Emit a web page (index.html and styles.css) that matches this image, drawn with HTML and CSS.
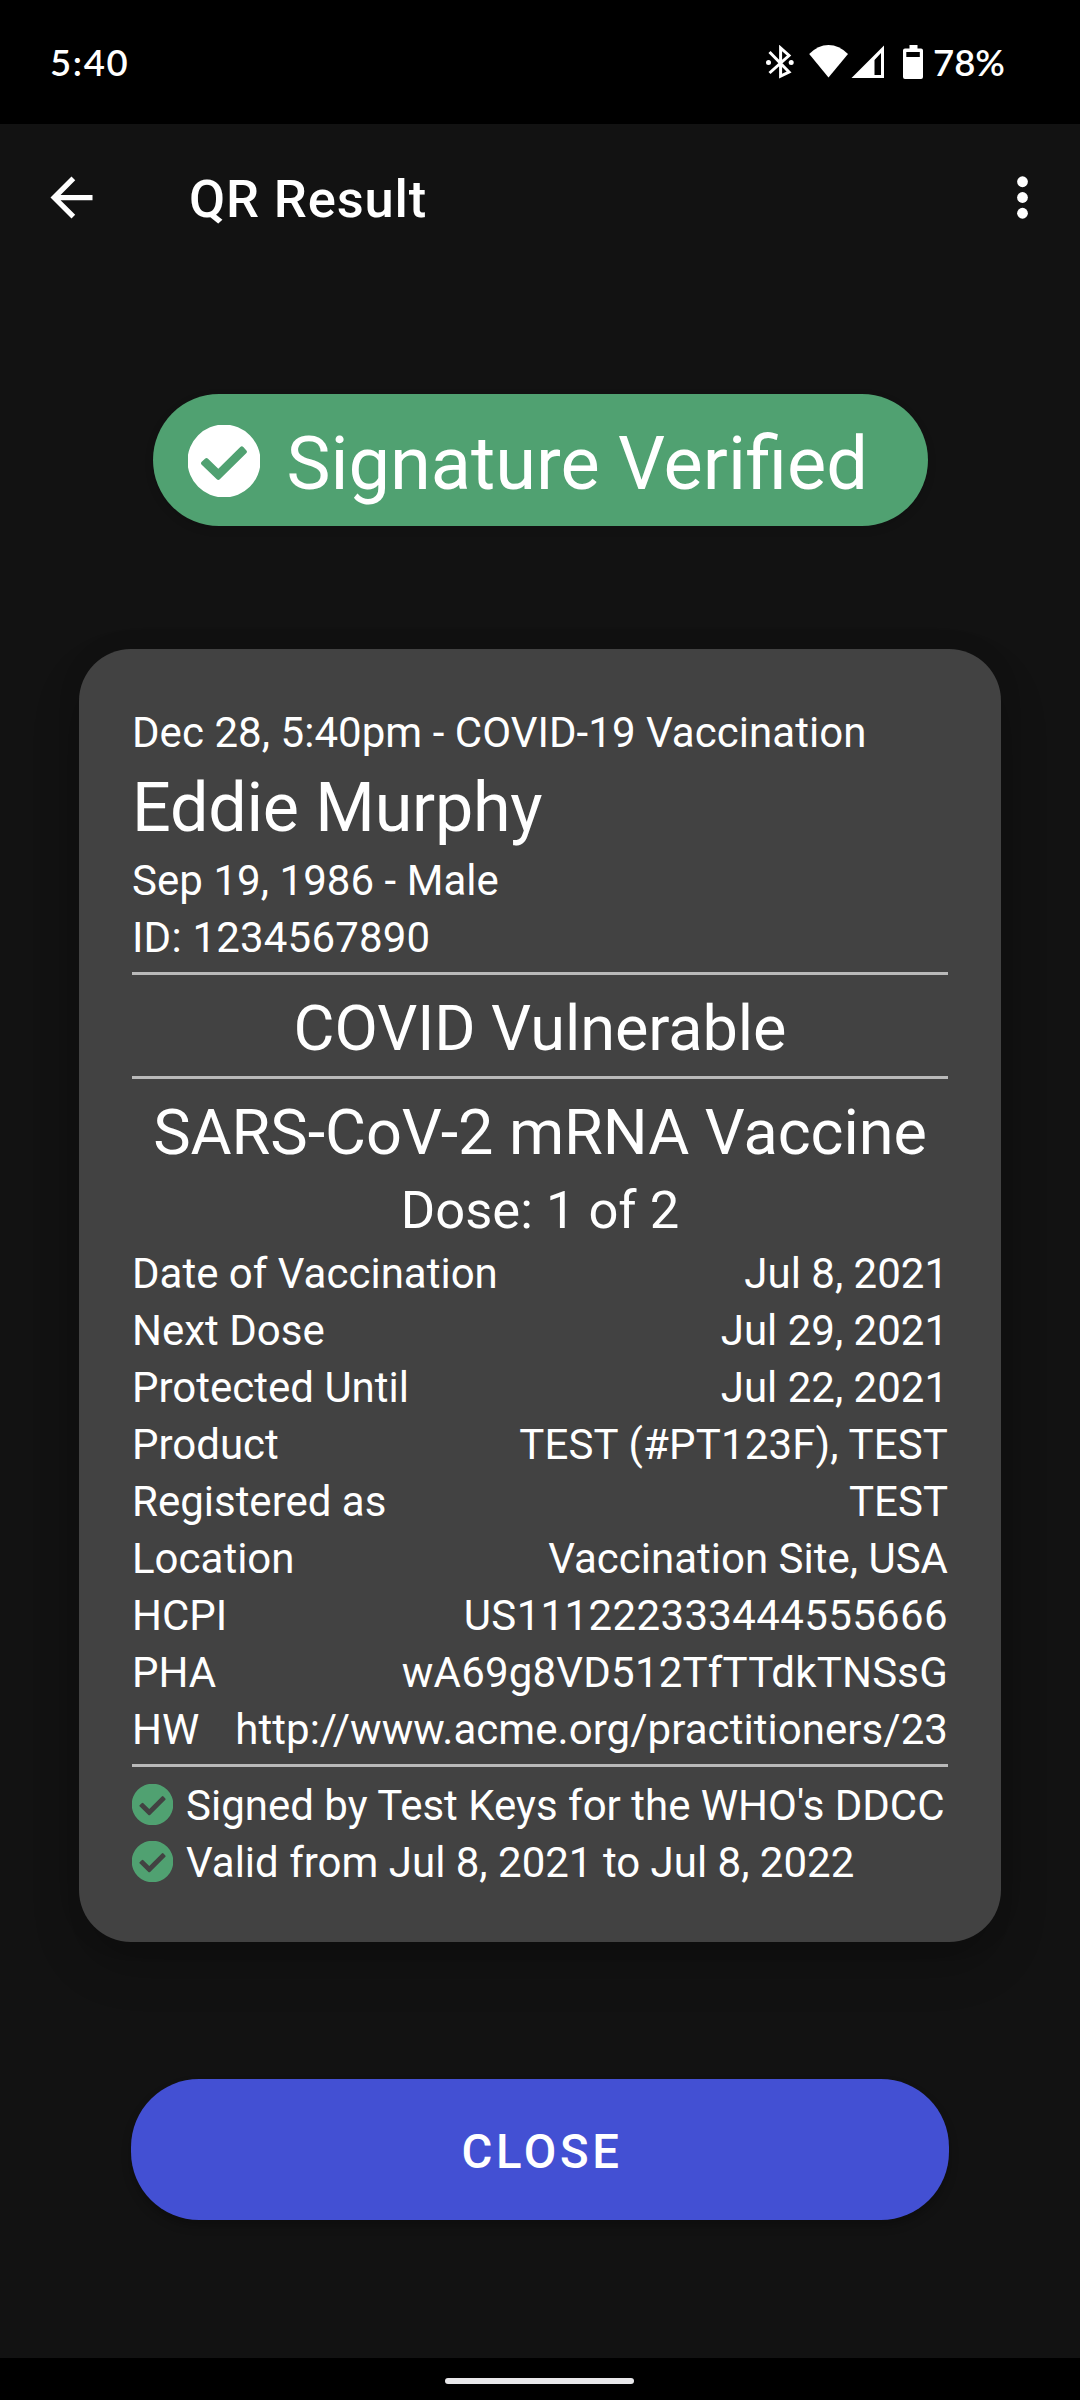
FILE: index.html
```html
<!DOCTYPE html>
<html lang="en">
<head>
<meta charset="utf-8">
<title>QR Result</title>
<link rel="stylesheet" href="styles.css">
</head>
<body>
<svg class="defs" aria-hidden="true">
  <symbol id="check" viewBox="0 0 72 72">
    <path fill="currentColor" fill-rule="evenodd" d="M36-.5a36.500 36.500 0 1 1 0 73a36.500 36.500 0 1 1 0-73zM13.700 36.700Q12.200 38.200 13.700 39.700L28.800 54.300Q30.300 55.800 31.800 54.300L58.200 28.200Q59.700 26.700 58.200 25.200L55.300 22Q53.800 20.500 52.300 22L30.300 43.700L20 33.800Q18.500 32.300 17 33.800z"/>
  </symbol>
</svg>
<div class="screen">
  <div class="status">
    <span class="clock">5:40</span>
    <svg class="indicators" viewBox="0 0 158 34" fill="#fff">
      <g fill="none" stroke="#fff" stroke-width="3">
        <path d="M3.500 7L23 27L14.600 31V3L23 10.500L3.500 28"/>
      </g>
      <circle cx="2.500" cy="17.500" r="2.500"/><circle cx="25.200" cy="17.500" r="2.500"/>
      <path d="M43.200 9Q52 0 62.500 0T82 9L62.500 32.600z"/>
      <path d="M85.500 33L118 .5V33zM108.500 15V30H115V8z" fill-rule="evenodd"/>
      <path d="M143.500 0h8v3.500h3.500q2 0 2 2V32q0 2-2 2H139q-2 0-2-2V5.500q0-2 2-2h4.500zM140.300 7v5h13.500V7z" fill-rule="evenodd"/>
    </svg>
    <span class="charge">78%</span>
  </div>
  <div class="appbar">
    <svg class="back" viewBox="0 0 24 24" fill="#fff"><path d="M20 11H7.830l5.590-5.590L12 4l-8 8 8 8 1.410-1.410L7.830 13H20z"/></svg>
    <h1 class="title">QR Result</h1>
    <svg class="more" viewBox="0 0 24 24" fill="#fff"><circle cx="12" cy="6" r="2.050"/><circle cx="12" cy="12" r="2.050"/><circle cx="12" cy="18" r="2.050"/></svg>
  </div>
  <div class="content">
    <div class="pill"><svg class="pill-icon"><use href="#check"/></svg><span>Signature Verified</span></div>
    <div class="card">
      <div class="line event">Dec 28, 5:40pm - COVID-19 Vaccination</div>
      <div class="name">Eddie Murphy</div>
      <div class="line event">Sep 19, 1986 - Male</div>
      <div class="line code">ID: 1234567890</div>
      <div class="rule"></div>
      <div class="heading">COVID Vulnerable</div>
      <div class="rule flush"></div>
      <div class="heading">SARS-CoV-2 mRNA Vaccine</div>
      <div class="dose">Dose: 1 of 2</div>
      <div class="row"><span>Date of Vaccination</span><span>Jul 8, 2021</span></div>
      <div class="row"><span>Next Dose</span><span>Jul 29, 2021</span></div>
      <div class="row"><span>Protected Until</span><span>Jul 22, 2021</span></div>
      <div class="row"><span>Product</span><span class="product">TEST (#PT123F), TEST</span></div>
      <div class="row"><span>Registered as</span><span>TEST</span></div>
      <div class="row"><span>Location</span><span>Vaccination Site, USA</span></div>
      <div class="row"><span>HCPI</span><span class="number">US111222333444555666</span></div>
      <div class="row"><span>PHA</span><span class="code">wA69g8VD512TfTTdkTNSsG</span></div>
      <div class="row"><span>HW</span><span class="event">http://www.acme.org/practitioners/23</span></div>
      <div class="rule"></div>
      <div class="checks">
        <div class="check"><svg class="check-icon"><use href="#check"/></svg><span>Signed by Test Keys for the WHO's DDCC</span></div>
        <div class="check"><svg class="check-icon"><use href="#check"/></svg><span>Valid from Jul 8, 2021 to Jul 8, 2022</span></div>
      </div>
    </div>
    <button class="close">CLOSE</button>
  </div>
  <div class="navbar"><div class="handle"></div></div>
</div>
</body>
</html>
```
FILE: styles.css
```css
* { box-sizing: border-box; }
body {
  margin: 0;
  background: #121212;
  color: #fff;
  font-family: Roboto, sans-serif;
  font-size: 42px;
  line-height: 57px;
  white-space: nowrap;
}
svg { display: block; flex: none; }
.defs { display: none; }
.screen {
  width: 1080px;
  height: 2400px;
  display: flex;
  flex-direction: column;
}
.status {
  height: 124px;
  background: #000;
  display: flex;
  align-items: center;
  padding: 0 75px 0 50px;
  font-family: Lato, sans-serif;
  font-size: 36.5px;
  font-weight: 600;
}
.clock { margin-right: auto; letter-spacing: 1.6px; }
.indicators { width: 158px; height: 34px; margin-right: 9px; }
.charge { width: 72px; }
.appbar {
  height: 147px;
  display: flex;
  align-items: center;
  padding: 0 26px 0 40px;
}
.back { width: 63px; height: 63px; }
.more { width: 63px; height: 63px; margin-left: auto; }
.title {
  margin: 3px 0 0 86px;
  font-size: 52.5px;
  font-weight: 500;
  letter-spacing: .85px;
}
.content {
  flex: 1;
  display: flex;
  flex-direction: column;
  align-items: center;
  padding-top: 123px;
}
.pill {
  width: 775px;
  height: 132px;
  border-radius: 66px;
  background: #50a171;
  display: flex;
  align-items: center;
  padding: 7px 0 0 35px;
  font-size: 74px;
  box-shadow: 0 3px 8px rgba(0, 0, 0, .15);
}
.pill-icon { width: 72px; height: 72px; margin: -5px 27px 0 0; }
.card {
  width: 922px;
  height: 1293px;
  margin-top: 123px;
  padding: 55px 53px 51px;
  border-radius: 52px;
  background: #424242;
  box-shadow: 0 24px 48px rgba(0, 0, 0, .2), 0 0 24px rgba(0, 0, 0, .08);
}
.event { letter-spacing: .05px; }
.product { letter-spacing: .15px; }
.code { letter-spacing: .2px; }
.number { letter-spacing: .36px; }
.name {
  height: 91px;
  padding-top: 2px;
  font-size: 68.25px;
  line-height: 91px;
  letter-spacing: -.25px;
}
.rule { height: 3px; margin-top: 6px; background: #b9b9b9; }
.rule.flush { margin-top: 0; }
.heading {
  height: 101px;
  padding-top: 6px;
  font-size: 63px;
  line-height: 95px;
  letter-spacing: -.07px;
  text-align: center;
}
.dose {
  height: 65px;
  font-size: 52.5px;
  line-height: 61px;
  text-align: center;
}
.row { display: flex; justify-content: space-between; }
.checks { padding-top: 10px; }
.check { display: flex; align-items: center; gap: 13px; }
.check-icon { width: 41px; height: 41px; margin-top: -2px; color: #50a171; }
.close {
  width: 818px;
  height: 141px;
  margin-top: 137px;
  padding: 4px 0 0 4px;
  border: 0;
  border-radius: 68px;
  background: #4350d3;
  color: #fff;
  font: 500 47.25px Roboto, sans-serif;
  letter-spacing: 3.7px;
  box-shadow: 0 6px 10px rgba(0, 0, 0, .25);
}
.navbar {
  height: 42px;
  background: #000;
  display: flex;
  justify-content: center;
  padding: 20px 1px 0 0;
}
.handle { width: 189px; height: 6px; border-radius: 3px; background: #e8e7ea; }
```
